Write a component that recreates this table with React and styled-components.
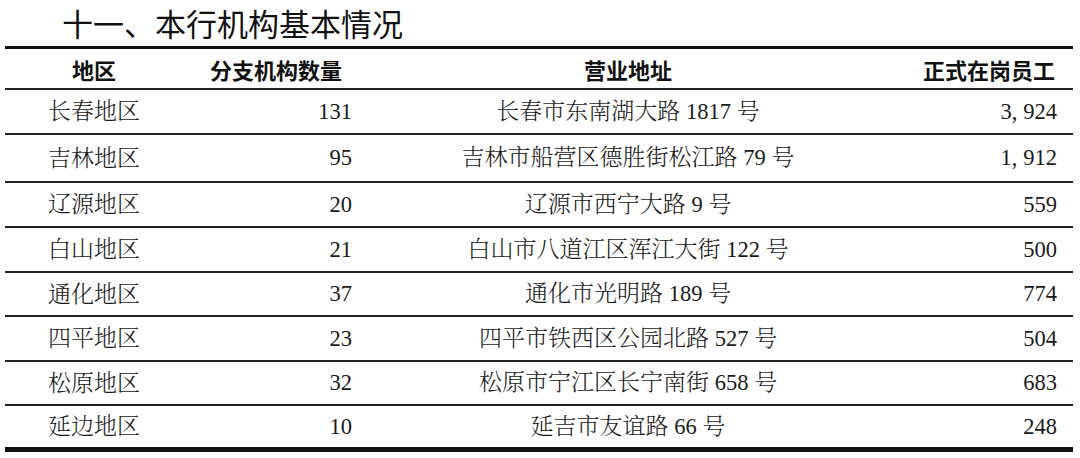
import React from "react";
import styled, { createGlobalStyle } from "styled-components";

const Global = createGlobalStyle`
  html, body { margin: 0; padding: 0; background: #fff; }
  body { width: 1080px; height: 458px; overflow: hidden; }
`;

const Page = styled.div`
  width: 1080px;
  height: 458px;
  box-sizing: border-box;
  padding: 0 5px;
  background: #fff;
`;

const Title = styled.h1`
  margin: 0;
  height: 46px;
  box-sizing: border-box;
  padding: 3px 0 0 57px;
  font-family: "Noto Sans CJK SC", sans-serif;
  font-weight: 400;
  font-size: 31px;
  line-height: 40px;
  color: #111;
`;

const Table = styled.div`
  width: 1068px;
  border-top: 3px solid #111;
  border-bottom: 5px solid #111;
`;

const Row = styled.div`
  display: grid;
  grid-template-columns: 178px 186px 518px 186px;
  height: ${(p) => p.$h}px;
  border-bottom: ${(p) => (p.$last ? "none" : "2px solid #222")};
  box-sizing: content-box;
  align-items: center;
`;

const HeadCell = styled.div`
  font-family: "Noto Sans CJK SC", sans-serif;
  font-weight: 700;
  font-size: 22px;
  line-height: 1;
  color: #111;
  text-align: ${(p) => p.$align || "center"};
  padding-right: ${(p) => p.$pr || 0}px;
`;

const Cell = styled.div`
  font-family: "Liberation Serif", "Noto Serif CJK SC", "Noto Sans CJK SC", serif;
  font-weight: 300;
  font-size: 23px;
  line-height: 1;
  color: #1a1a1a;
  text-align: ${(p) => p.$align || "center"};
  padding-right: ${(p) => p.$pr || 0}px;
  white-space: nowrap;
`;

const Num = styled.span`
  font-family: "Liberation Serif", serif;
  font-weight: 400;
  font-size: 22.5px;
`;

const Comma = styled.span`
  margin-right: 6px;
`;

const data = [
  ["长春地区", "131", ["长春市东南湖大路 ", "1817", " 号"], "3,924"],
  ["吉林地区", "95", ["吉林市船营区德胜街松江路 ", "79", " 号"], "1,912"],
  ["辽源地区", "20", ["辽源市西宁大路 ", "9", " 号"], "559"],
  ["白山地区", "21", ["白山市八道江区浑江大街 ", "122", " 号"], "500"],
  ["通化地区", "37", ["通化市光明路 ", "189", " 号"], "774"],
  ["四平地区", "23", ["四平市铁西区公园北路 ", "527", " 号"], "504"],
  ["松原地区", "32", ["松原市宁江区长宁南街 ", "658", " 号"], "683"],
  ["延边地区", "10", ["延吉市友谊路 ", "66", " 号"], "248"],
];

const heights = [43, 46, 43, 43, 42, 43, 42, 41];

function Staff({ value }) {
  const parts = value.split(",");
  if (parts.length === 1) return <Num>{value}</Num>;
  return (
    <Num>
      {parts[0]}
      <Comma>,</Comma>
      {parts[1]}
    </Num>
  );
}

export default function App() {
  return (
    <Page>
      <Global />
      <Title>十一、本行机构基本情况</Title>
      <Table>
        <Row $h={39}>
          <HeadCell>地区</HeadCell>
          <HeadCell>分支机构数量</HeadCell>
          <HeadCell>营业地址</HeadCell>
          <HeadCell $align="right" $pr={18}>正式在岗员工</HeadCell>
        </Row>
        {data.map((r, i) => (
          <Row key={r[0]} $h={heights[i]} $last={i === data.length - 1}>
            <Cell>{r[0]}</Cell>
            <Cell $align="right" $pr={17}><Num>{r[1]}</Num></Cell>
            <Cell>
              {r[2][0]}
              <Num>{r[2][1]}</Num>
              {r[2][2]}
            </Cell>
            <Cell $align="right" $pr={16}><Staff value={r[3]} /></Cell>
          </Row>
        ))}
      </Table>
    </Page>
  );
}
